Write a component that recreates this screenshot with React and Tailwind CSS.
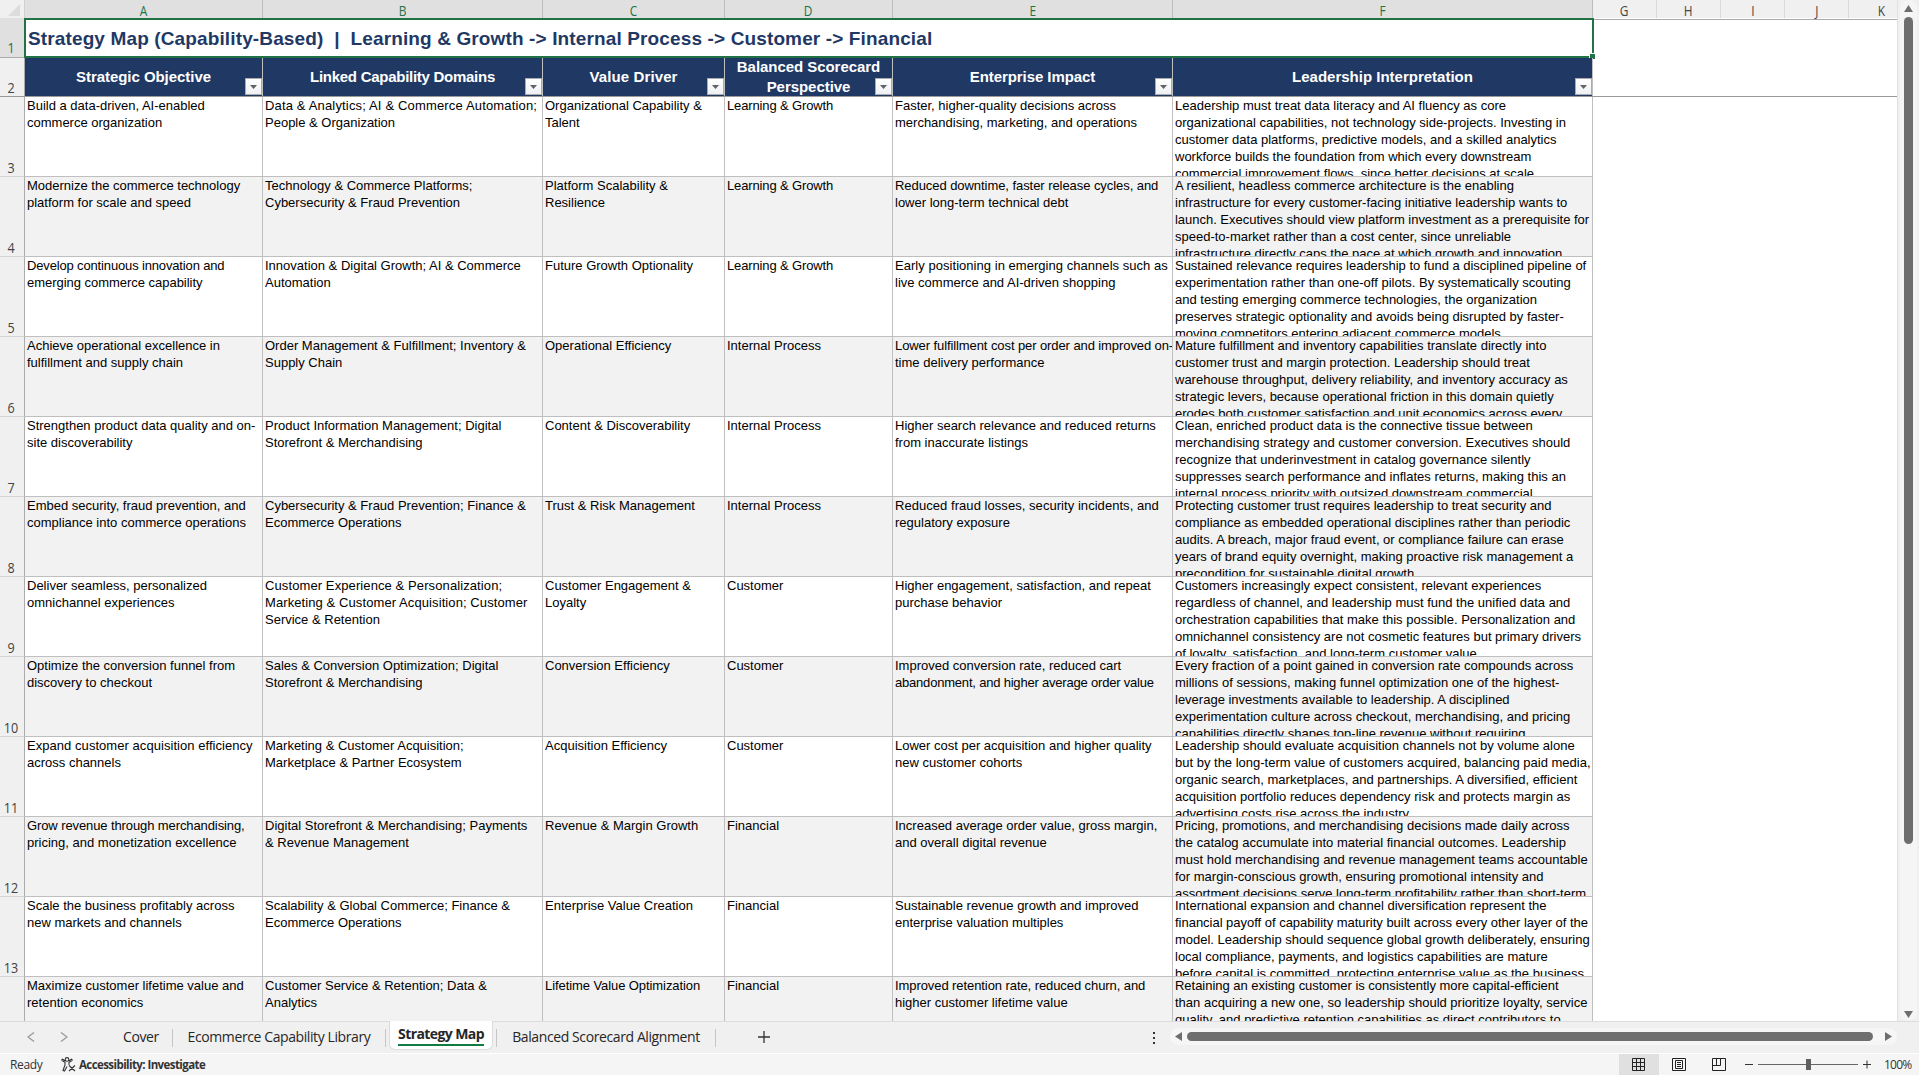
import React from "react";

const COLS = [
  { id: "A", title: ["Strategic Objective"], track: "tracking-[-0.05px]" },
  { id: "B", title: ["Linked Capability Domains"], track: "tracking-[-0.27px]" },
  { id: "C", title: ["Value Driver"], track: "tracking-[0.12px]" },
  { id: "D", title: ["Balanced Scorecard", "Perspective"], track: "tracking-[-0.05px]" },
  { id: "E", title: ["Enterprise Impact"], track: "tracking-[-0.08px]" },
  { id: "F", title: ["Leadership Interpretation"], track: "" },
];

const ROWS = [
  ["Build a data-driven, AI-enabled|commerce organization", "Data & Analytics; AI & Commerce Automation;|People & Organization", "Organizational Capability &|Talent", "Learning & Growth", "Faster, higher-quality decisions across|merchandising, marketing, and operations", "Leadership must treat data literacy and AI fluency as core|organizational capabilities, not technology side-projects. Investing in|customer data platforms, predictive models, and a skilled analytics|workforce builds the foundation from which every downstream|commercial improvement flows, since better decisions at scale"],
  ["Modernize the commerce technology|platform for scale and speed", "Technology & Commerce Platforms;|Cybersecurity & Fraud Prevention", "Platform Scalability &|Resilience", "Learning & Growth", "Reduced downtime, faster release cycles, and|lower long-term technical debt", "A resilient, headless commerce architecture is the enabling|infrastructure for every customer-facing initiative leadership wants to|launch. Executives should view platform investment as a prerequisite for|speed-to-market rather than a cost center, since unreliable|infrastructure directly caps the pace at which growth and innovation"],
  ["Develop continuous innovation and|emerging commerce capability", "Innovation & Digital Growth; AI & Commerce|Automation", "Future Growth Optionality", "Learning & Growth", "Early positioning in emerging channels such as|live commerce and AI-driven shopping", "Sustained relevance requires leadership to fund a disciplined pipeline of|experimentation rather than one-off pilots. By systematically scouting|and testing emerging commerce technologies, the organization|preserves strategic optionality and avoids being disrupted by faster-|moving competitors entering adjacent commerce models."],
  ["Achieve operational excellence in|fulfillment and supply chain", "Order Management & Fulfillment; Inventory &|Supply Chain", "Operational Efficiency", "Internal Process", "Lower fulfillment cost per order and improved on-|time delivery performance", "Mature fulfillment and inventory capabilities translate directly into|customer trust and margin protection. Leadership should treat|warehouse throughput, delivery reliability, and inventory accuracy as|strategic levers, because operational friction in this domain quietly|erodes both customer satisfaction and unit economics across every"],
  ["Strengthen product data quality and on-|site discoverability", "Product Information Management; Digital|Storefront & Merchandising", "Content & Discoverability", "Internal Process", "Higher search relevance and reduced returns|from inaccurate listings", "Clean, enriched product data is the connective tissue between|merchandising strategy and customer conversion. Executives should|recognize that underinvestment in catalog governance silently|suppresses search performance and inflates returns, making this an|internal process priority with outsized downstream commercial"],
  ["Embed security, fraud prevention, and|compliance into commerce operations", "Cybersecurity & Fraud Prevention; Finance &|Ecommerce Operations", "Trust & Risk Management", "Internal Process", "Reduced fraud losses, security incidents, and|regulatory exposure", "Protecting customer trust requires leadership to treat security and|compliance as embedded operational disciplines rather than periodic|audits. A breach, major fraud event, or compliance failure can erase|years of brand equity overnight, making proactive risk management a|precondition for sustainable digital growth."],
  ["Deliver seamless, personalized|omnichannel experiences", "Customer Experience & Personalization;|Marketing & Customer Acquisition; Customer|Service & Retention", "Customer Engagement &|Loyalty", "Customer", "Higher engagement, satisfaction, and repeat|purchase behavior", "Customers increasingly expect consistent, relevant experiences|regardless of channel, and leadership must fund the unified data and|orchestration capabilities that make this possible. Personalization and|omnichannel consistency are not cosmetic features but primary drivers|of loyalty, satisfaction, and long-term customer value."],
  ["Optimize the conversion funnel from|discovery to checkout", "Sales & Conversion Optimization; Digital|Storefront & Merchandising", "Conversion Efficiency", "Customer", "Improved conversion rate, reduced cart|abandonment, and higher average order value", "Every fraction of a point gained in conversion rate compounds across|millions of sessions, making funnel optimization one of the highest-|leverage investments available to leadership. A disciplined|experimentation culture across checkout, merchandising, and pricing|capabilities directly shapes top-line revenue without requiring"],
  ["Expand customer acquisition efficiency|across channels", "Marketing & Customer Acquisition;|Marketplace & Partner Ecosystem", "Acquisition Efficiency", "Customer", "Lower cost per acquisition and higher quality|new customer cohorts", "Leadership should evaluate acquisition channels not by volume alone|but by the long-term value of customers acquired, balancing paid media,|organic search, marketplaces, and partnerships. A diversified, efficient|acquisition portfolio reduces dependency risk and protects margin as|advertising costs rise across the industry."],
  ["Grow revenue through merchandising,|pricing, and monetization excellence", "Digital Storefront & Merchandising; Payments|& Revenue Management", "Revenue & Margin Growth", "Financial", "Increased average order value, gross margin,|and overall digital revenue", "Pricing, promotions, and merchandising decisions made daily across|the catalog accumulate into material financial outcomes. Leadership|must hold merchandising and revenue management teams accountable|for margin-conscious growth, ensuring promotional intensity and|assortment decisions serve long-term profitability rather than short-term"],
  ["Scale the business profitably across|new markets and channels", "Scalability & Global Commerce; Finance &|Ecommerce Operations", "Enterprise Value Creation", "Financial", "Sustainable revenue growth and improved|enterprise valuation multiples", "International expansion and channel diversification represent the|financial payoff of capability maturity built across every other layer of the|model. Leadership should sequence global growth deliberately, ensuring|local compliance, payments, and logistics capabilities are mature|before capital is committed, protecting enterprise value as the business"],
  ["Maximize customer lifetime value and|retention economics", "Customer Service & Retention; Data &|Analytics", "Lifetime Value Optimization", "Financial", "Improved retention rate, reduced churn, and|higher customer lifetime value", "Retaining an existing customer is consistently more capital-efficient|than acquiring a new one, so leadership should prioritize loyalty, service|quality, and predictive retention capabilities as direct contributors to"],
];

// Lines whose letter spacing differs from the sheet's default.
const TRACKING = {
  "Data & Analytics; AI & Commerce Automation;": "tracking-[0.16px]",
  "Develop continuous innovation and": "tracking-[-0.15px]",
  "emerging commerce capability": "tracking-[-0.03px]",
  "abandonment, and higher average order value": "tracking-[-0.2px]",
  "Customer Experience & Personalization;": "tracking-[0.1px]",
  "Marketing & Customer Acquisition; Customer": "tracking-[0.09px]",
  "Grow revenue through merchandising,": "tracking-[-0.1px]",
  "Expand customer acquisition efficiency": "tracking-[0.05px]",
  "Early positioning in emerging channels such as": "tracking-[0.04px]",
  "Lower fulfillment cost per order and improved on-": "tracking-[-0.09px]",
  "Reduced downtime, faster release cycles, and": "tracking-[-0.06px]",
  "Improved retention rate, reduced churn, and": "tracking-[-0.08px]",
  "Reduced fraud losses, security incidents, and": "tracking-[0.05px]",
  "Learning & Growth": "tracking-[-0.13px]",
  "Lifetime Value Optimization": "tracking-[-0.08px]",
  "launch. Executives should view platform investment as a prerequisite for": "tracking-[-0.02px]",
  "Sustained relevance requires leadership to fund a disciplined pipeline of": "tracking-[-0.03px]",
  "financial payoff of capability maturity built across every other layer of the": "tracking-[-0.02px]",
  "model. Leadership should sequence global growth deliberately, ensuring": "tracking-[-0.02px]",
  "Retaining an existing customer is consistently more capital-efficient": "tracking-[-0.03px]",
};

const GRID = "grid grid-cols-[238px_280px_182px_168px_280px_420px]";
const UI = "font-['Open_Sans',sans-serif]";

function FilterButton() {
  return (
    <span className="absolute right-0 bottom-px flex h-[17px] w-[17px] items-center justify-center border border-[#ababab] bg-linear-to-b from-white to-[#eef0f4]">
      <svg width="7" height="4" viewBox="0 0 7 4"><path d="M0 0H7L3.5 4Z" fill="#5f6368" /></svg>
    </span>
  );
}

function Letter({ children }) {
  return <span className="inline-block translate-y-[1.5px] scale-x-[.85]">{children}</span>;
}

function ColumnHeaders() {
  return (
    <div className={`flex h-[18px] shrink-0 text-[14px] leading-[18px] ${UI}`}>
      <div className="flex w-[25px] justify-end border-r border-[#d0d0d0] bg-[#f0f0f0] pt-1 pr-1">
        <svg width="12" height="12" viewBox="0 0 12 12"><path d="M12 0V12H0Z" fill="#dcdcdc" /></svg>
      </div>
      <div className={`${GRID} h-[18px] bg-[#e0e0e0] text-center text-[#217346]`}>
        {COLS.map((c) => (
          <div key={c.id} className="h-[18px] border-r border-[#bdbdbd]"><Letter>{c.id}</Letter></div>
        ))}
      </div>
      <div className="flex h-[18px] flex-1 bg-[#f0f0f0] text-center text-[#444]">
        {["G", "H", "I", "J"].map((c) => (
          <div key={c} className="h-[18px] w-16 shrink-0 border-r border-[#dadada]"><Letter>{c}</Letter></div>
        ))}
        <div className="h-[18px] flex-1 pl-[16px]"><Letter>K</Letter></div>
      </div>
    </div>
  );
}

function RowNumber({ n, className = "" }) {
  return (
    <div className={`flex w-[25px] shrink-0 items-end justify-center border-r border-[#ababab] pr-px text-[14px] leading-[17px] ${UI} ${className}`}>
      <span className="inline-block scale-x-[.9]">{n}</span>
    </div>
  );
}

function Sheet() {
  return (
    <div className="flex h-[1021px] w-[1897px] flex-col overflow-hidden bg-white">
      <ColumnHeaders />
      <div className="flex h-[40px] shrink-0">
        <RowNumber n="1" className="border-b border-b-[#ababab] bg-[#e0e0e0] pb-px text-[#217346]" />
        <div className="relative -ml-px h-[40px] w-[1570px] border-2 border-[#217346] pl-[2px] font-['Liberation_Sans',Arial,sans-serif] text-[19px] leading-[37px] font-bold tracking-[0.13px] whitespace-pre text-[#1f3864]">
          Strategy Map (Capability-Based)  |  Learning &amp; Growth -&gt; Internal Process -&gt; Customer -&gt; Financial
          <span className="absolute -right-[3px] -bottom-[3px] h-[6px] w-[6px] border-t border-l border-white bg-[#217346]" />
        </div>
        <div className="mt-px h-px flex-1 bg-[#ababab]" />
      </div>
      <div className="flex h-[39px] shrink-0 border-b border-[#9b9b9b]">
        <RowNumber n="2" className="bg-[#f0f0f0] text-[#444]" />
        <div className={`${GRID} font-['Liberation_Sans',Arial,sans-serif] text-[15px] leading-[20px] font-bold text-white`}>
          {COLS.map((c) => (
            <div key={c.id} className="relative flex h-[38px] flex-col items-center justify-center border-r border-[#bfbfbf] bg-[#1f3864]">
              {c.title.map((t) => <span key={t} className={`whitespace-pre ${c.track}`}>{t}</span>)}
              <FilterButton />
            </div>
          ))}
        </div>
      </div>
      {ROWS.map((r, i) => (
        <div key={i} className="flex h-[80px] shrink-0">
          <RowNumber n={i + 3} className="border-b border-b-[#d4d4d4] bg-[#f0f0f0] text-[#444]" />
          <div className={`${GRID} font-['Liberation_Sans',Arial,sans-serif] text-[13px] leading-[17px] text-black ${i % 2 ? "bg-[#f2f2f2]" : "bg-white"}`}>
            {r.map((cell, j) => (
              <div key={j} className="h-[80px] overflow-hidden border-r border-b border-[#bfbfbf] pl-0.5">
                {cell.split("|").map((l) => <div key={l} className={`whitespace-pre ${TRACKING[l] || ""}`}>{l}</div>)}
              </div>
            ))}
          </div>
        </div>
      ))}
    </div>
  );
}

function VerticalScroll() {
  return (
    <div className="flex w-[22px] flex-col items-center border-l border-[#e1e1e1] bg-[#f0f0f0]">
      <div className="flex h-[1021px] w-[17px] flex-col items-center rounded-full bg-[#f5f5f5] pt-[5px]">
        <svg width="9" height="7" viewBox="0 0 9 7"><path d="M4.5 0L9 7H0Z" fill="#6e6e6e" /></svg>
        <div className="mt-[5px] h-[827px] w-[9px] rounded-full bg-[#6e6e6e]" />
        <svg className="mt-auto mb-[3px]" width="9" height="7" viewBox="0 0 9 7"><path d="M4.5 7L9 0H0Z" fill="#6e6e6e" /></svg>
      </div>
    </div>
  );
}

function SheetTabs() {
  return (
    <div className={`flex h-[32px] shrink-0 border-t border-[#dcdcdc] text-[14px] tracking-[-0.4px] text-[#262626] ${UI}`}>
      <div className="flex w-[98px] items-center gap-[25px] pb-px pl-[27px]">
        {["M7 .5L1 5L7 9.5", "M1 .5L7 5L1 9.5"].map((d) => (
          <svg key={d} width="8" height="10" viewBox="0 0 8 10" fill="none" stroke="#9a9a9a" strokeWidth="1.3"><path d={d} /></svg>
        ))}
      </div>
      <div className="flex h-[18px] w-[75px] items-center justify-center self-center border-r border-[#c6c6c6] pb-0.5 pl-3">Cover</div>
      <div className="flex h-[18px] w-[213px] items-center justify-center self-center border-r border-[#c6c6c6] pb-0.5">Ecommerce Capability Library</div>
      <div className="mx-[3px] -mt-px flex h-[29px] w-[104px] justify-center rounded-b-md border border-t-0 border-[#dcdcdc] bg-white">
        <span className="h-[25px] border-b-2 border-[#107c41] pt-[2px] leading-[21px] font-bold tracking-[-0.6px] whitespace-pre">Strategy Map</span>
      </div>
      <div className="flex h-[18px] w-[220px] items-center justify-center self-center border-x border-[#c6c6c6] pb-0.5">Balanced Scorecard Alignment</div>
      <div className="flex w-[95px] items-center justify-center pb-px">
        <svg width="12" height="12" viewBox="0 0 12 12" stroke="#333" strokeWidth="1.3"><path d="M6 0V12M0 6H12" /></svg>
      </div>
      <div className="ml-auto flex w-[12px] flex-col items-center justify-center gap-[3px]">
        {[0, 1, 2].map((i) => <span key={i} className="h-[2px] w-[2px] bg-[#333]" />)}
      </div>
      <div className="mt-[6px] mr-[22px] ml-[10px] flex h-[17px] w-[727px] items-center gap-[5px] rounded-full bg-[#f6f6f6] px-[5px]">
        <svg width="7" height="9" viewBox="0 0 7 9"><path d="M7 0V9L0 4.5Z" fill="#6e6e6e" /></svg>
        <div className="h-[9px] w-[686px] rounded-full bg-[#6e6e6e]" />
        <svg className="ml-auto" width="7" height="9" viewBox="0 0 7 9"><path d="M0 0V9L7 4.5Z" fill="#6e6e6e" /></svg>
      </div>
    </div>
  );
}

function StatusBar() {
  return (
    <div className={`flex h-[22px] shrink-0 items-center border-t border-white bg-[#f5f5f5] text-[12px] text-[#333] ${UI}`}>
      <span className="ml-[10px] w-[50px] tracking-[-0.35px]">Ready</span>
      <svg width="16" height="15" viewBox="0 0 16 15" fill="none" stroke="#333" strokeWidth="1.1"><circle cx="7" cy="2.4" r="1.8" /><path d="M1.5 3.2L5 5.2V8L3 13.5L4.5 14L7 9.5M12.5 3.2L9 5.2V8M1.5 3.2L2.5 2.2L5.5 4M12.5 3.2L11.5 2.2L8.5 4M9 8.5L15 14M15 8.5L9 14" /></svg>
      <span className="ml-[3px] text-[11.5px] font-bold tracking-[-0.58px]">Accessibility: Investigate</span>
      <div className="ml-auto flex h-full w-[300px] shrink-0 items-center">
        <div className="flex h-full w-[40px] shrink-0 items-center justify-center bg-[#e0e0e0] pr-px">
          <svg width="13" height="13" viewBox="0 0 13 13" fill="none" stroke="#222"><path d="M.5 .5H12.5V12.5H.5ZM4.5 0V13M8.5 0V13M0 4.5H13M0 8.5H13" /></svg>
        </div>
        <div className="flex w-[40px] shrink-0 justify-center">
          <svg width="14" height="13" viewBox="0 0 14 13" fill="none" stroke="#222"><path d="M.5 .5H13.5V12.5H.5ZM3.5 2.5H10.5V10.5H3.5ZM5 4.5H9M5 6.5H9M5 8.5H9" /></svg>
        </div>
        <div className="flex w-[40px] shrink-0 justify-center">
          <svg width="14" height="13" viewBox="0 0 14 13" fill="none" stroke="#222"><path d="M.5 .5H13.5V12.5H.5ZM4.5 0V7.5M8.5 0V7.5H0" /></svg>
        </div>
        <div className="ml-[6px] h-px w-[8px] shrink-0 bg-[#333]" />
        <div className="mx-[5px] flex h-px w-[100px] shrink-0 items-center justify-center bg-[#666]"><div className="h-[11px] w-[5px] shrink-0 bg-[#5f5f5f]" /></div>
        <svg className="shrink-0" width="8" height="9" viewBox="0 0 8 9" stroke="#333"><path d="M4 .5V8.5M0 4.5H8" /></svg>
        <span className="ml-[13px] tracking-[-0.75px]">100%</span>
      </div>
    </div>
  );
}

export default function App() {
  return (
    <div className="flex h-[1075px] w-[1919px] flex-col overflow-hidden bg-[#f0f0f0]">
      <div className="flex h-[1021px] shrink-0">
        <Sheet />
        <VerticalScroll />
      </div>
      <SheetTabs />
      <StatusBar />
    </div>
  );
}
